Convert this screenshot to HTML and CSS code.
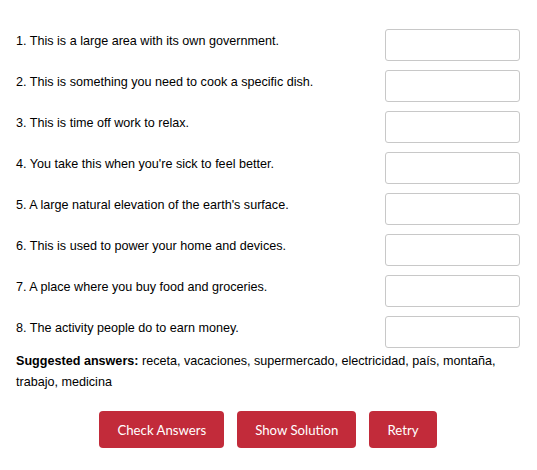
FILE: index.html
```html
<!DOCTYPE html>
<html>
<head>
<meta charset="utf-8">
<link rel="stylesheet" href="styles.css">
</head>
<body>
<div class="quiz">
  <div class="rows">
    <div class="row"><span class="q">1. This is a large area with its own government.</span><input class="ans" type="text"></div>
    <div class="row"><span class="q">2. This is something you need to cook a specific dish.</span><input class="ans" type="text"></div>
    <div class="row"><span class="q">3. This is time off work to relax.</span><input class="ans" type="text"></div>
    <div class="row"><span class="q">4. You take this when you're sick to feel better.</span><input class="ans" type="text"></div>
    <div class="row"><span class="q">5. A large natural elevation of the earth's surface.</span><input class="ans" type="text"></div>
    <div class="row"><span class="q">6. This is used to power your home and devices.</span><input class="ans" type="text"></div>
    <div class="row"><span class="q">7. A place where you buy food and groceries.</span><input class="ans" type="text"></div>
    <div class="row"><span class="q">8. The activity people do to earn money.</span><input class="ans" type="text"></div>
  </div>
  <p class="hint"><b>Suggested answers:</b> receta, vacaciones, supermercado, electricidad, país, montaña, trabajo, medicina</p>
  <div class="actions">
    <button class="btn">Check Answers</button>
    <button class="btn">Show Solution</button>
    <button class="btn">Retry</button>
  </div>
</div>
</body>
</html>
```
FILE: styles.css
```css
html, body {
  margin: 0;
  padding: 0;
  background: #fff;
}
body {
  font-family: "Liberation Sans", Arial, sans-serif;
  font-size: 12.6px;
  color: #000;
}
.quiz {
  padding: 29px 17px 0 16px;
}
.rows {
  display: flex;
  flex-direction: column;
  gap: 9px;
}
.row {
  display: flex;
  justify-content: space-between;
  align-items: flex-start;
}
.q {
  padding-top: 5px;
  line-height: 14px;
}
.ans {
  box-sizing: border-box;
  width: 135px;
  height: 32px;
  margin: 0;
  border: 1px solid #c8c8c8;
  border-radius: 3px;
  background: #fff;
  padding: 0 6px;
  font: inherit;
}
.hint {
  margin: 3px 0 0 0;
  line-height: 21px;
}
.actions {
  display: flex;
  justify-content: center;
  gap: 13px;
  margin-top: 18px;
}
.btn {
  box-sizing: border-box;
  height: 37px;
  padding: 0 18px;
  border: none;
  border-radius: 4px;
  background: #c22b3a;
  color: #fff;
  font-family: Lato, "Open Sans", sans-serif;
  font-size: 13.2px;
}
```
